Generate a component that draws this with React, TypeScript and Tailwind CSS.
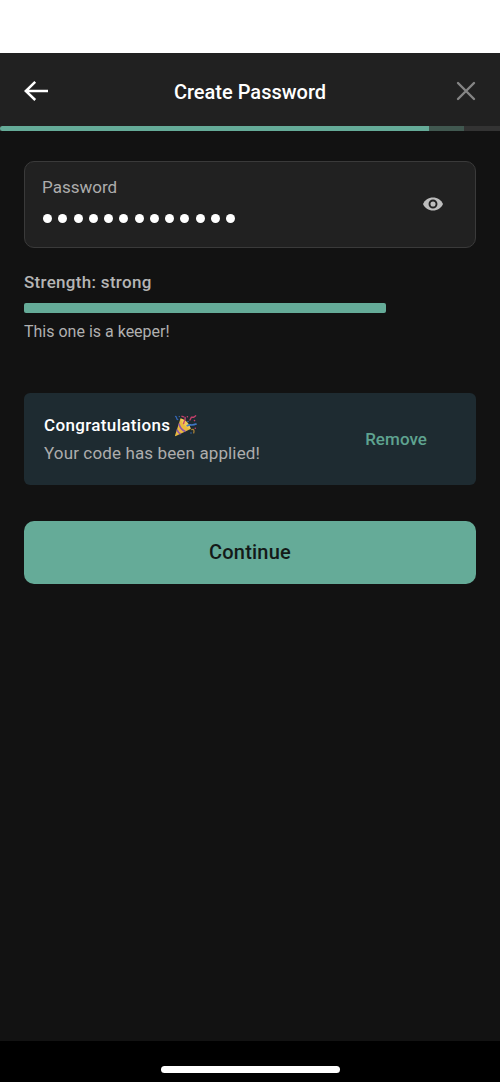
import { useState } from 'react'

const PASSWORD_LENGTH = 13

function ArrowLeftIcon() {
  return (
    <svg width="25" height="22" viewBox="0 0 25 22" fill="none">
      <path
        d="M11.2 1.8 1.8 11l9.4 9M2.2 11H24"
        stroke="#ffffff"
        strokeWidth="2.5"
      />
    </svg>
  )
}

function CloseIcon() {
  return (
    <svg width="20" height="20" viewBox="0 0 20 20" fill="none">
      <path
        d="M2 2l16 16M18 2 2 18"
        stroke="#858585"
        strokeWidth="2.4"
        strokeLinecap="round"
      />
    </svg>
  )
}

function EyeIcon() {
  return (
    <svg width="20" height="14" viewBox="0 0 20 14">
      <path
        d="M0 7C1.7 2.9 5.5.4 10 .4S18.3 2.9 20 7c-1.7 4.1-5.5 6.5-10 6.5S1.7 11.1 0 7Z"
        fill="#bdbdbd"
      />
      <circle cx="10" cy="7" r="3.5" fill="#bdbdbd" stroke="#212121" strokeWidth="1.9" />
    </svg>
  )
}

function PartyIcon() {
  return (
    <svg width="23" height="22" viewBox="0 0 23 22" fill="none">
      <path d="M6.5 3.5 1 20.4c-.1.7.3.9.9.7L16.6 14C16 9.5 11.5 4.5 6.5 3.5Z" fill="#e9b93f" />
      <path d="M6.5 3.5C11.5 4.5 16 9.5 16.6 14c-3.6-.4-9.4-5.8-10.1-10.5Z" fill="#f0cb58" />
      <path d="M4.9 8.5c.9 3.6 3.3 6.8 6.4 8M2.9 14.5c.7 2 2.1 3.7 3.8 4.5" stroke="#8d53ad" strokeWidth="1.5" />
      <path d="M9.6 8.6c.3-2.5 2.2-3.6 1.5-6.1" stroke="#c64473" strokeWidth="1.4" strokeLinecap="round" />
      <path d="M13.3 10.7c2.5-1.8 4.7.4 8.7-1.6" stroke="#3f78c6" strokeWidth="1.7" strokeLinecap="round" />
      <path d="M1.5 1.3c1.7.1.2 2.7 2.3 3.3" stroke="#3466b5" strokeWidth="1.3" strokeLinecap="round" />
      <path d="m16 5 1.4-2.8 2.3.1 2-1.5M8 1.3l1.7.5" stroke="#c23f6b" strokeWidth="1.4" strokeLinecap="round" />
      <path d="M17.7 14.6c2.4-1 2.6 1.7 2 3.3" stroke="#a98037" strokeWidth="1.3" strokeLinecap="round" />
      <g fill="#3b6fb9">
        <circle cx="14" cy="6.5" r=".8" />
        <circle cx="17" cy="18" r=".7" />
        <circle cx="5.3" cy="1.6" r=".7" />
      </g>
      <g fill="#c34470">
        <circle cx="20.5" cy="5.6" r=".8" />
        <circle cx="21.3" cy="13.2" r=".8" />
        <circle cx="13.4" cy="1.7" r=".8" />
      </g>
    </svg>
  )
}

export default function App() {
  const [hasCode, setHasCode] = useState(true)

  return (
    <div className="flex h-[1082px] w-[500px] flex-col overflow-hidden bg-[#121212] font-['Roboto',sans-serif]">
      <div className="h-[53px] shrink-0 bg-white" />

      <header className="flex h-[73px] shrink-0 items-center justify-between bg-[#212121] px-6 pt-[2px]">
        <button aria-label="Back" className="flex w-[25px]">
          <ArrowLeftIcon />
        </button>
        <h1 className="pt-[2px] text-[20px] leading-6 font-medium text-white">
          Create Password
        </h1>
        <button aria-label="Close" className="flex w-[25px] justify-end">
          <CloseIcon />
        </button>
      </header>

      <div className="flex h-[5px] shrink-0 bg-[#333333]">
        <div className="w-[429px] rounded-l-full bg-[#65ab98]" />
        <div className="w-[35px] bg-[#415850]" />
      </div>

      <main className="flex flex-1 flex-col px-6 pt-[30px]">
        <div className="flex h-[87px] items-center justify-between rounded-[10px] border border-[#3a3a3a] bg-[#212121] pr-[32px] pl-[17px]">
          <div className="flex flex-col pb-[10px]">
            <span className="text-[17px] leading-5 text-[#adadad]">Password</span>
            <div className="mt-[17px] flex gap-[6.28px] pl-px">
              {Array.from({ length: PASSWORD_LENGTH }, (_, index) => (
                <span key={index} className="size-[9px] rounded-full bg-white" />
              ))}
            </div>
          </div>
          <button aria-label="Show password" className="pb-px">
            <EyeIcon />
          </button>
        </div>

        <p className="mt-6 text-[17px] leading-5 font-medium tracking-[0.3px] text-[#b5b5b5]">
          Strength: strong
        </p>
        <div className="mt-[11px] h-[10px] w-[362px] rounded-[2px] bg-[#65ab98]" />
        <p className="mt-[9px] text-[16px] leading-5 text-[#b0b0b0]">
          This one is a keeper!
        </p>

        {hasCode && (
          <div className="mt-[51px] flex h-[92px] items-center justify-between rounded-[6px] bg-[#1e2b31] pr-[49px] pl-[20px]">
            <div className="pt-px">
              <div className="flex h-6 items-center gap-[4px]">
                <span className="text-[17px] font-medium tracking-[0.35px] text-white">
                  Congratulations
                </span>
                <PartyIcon />
              </div>
              <p className="mt-[3px] text-[17px] leading-6 tracking-[0.13px] text-[#adadad]">
                Your code has been applied!
              </p>
            </div>
            <button
              className="pt-[2px] text-[17px] font-medium tracking-[0.05px] text-[#5fa390]"
              onClick={() => setHasCode(false)}
            >
              Remove
            </button>
          </div>
        )}

        <button className="mt-[36px] h-[63px] rounded-[10px] bg-[#65ab98] pb-[2px] text-[20px] font-medium tracking-[0.2px] text-[#141a18]">
          Continue
        </button>
      </main>

      <footer className="flex h-[41px] shrink-0 justify-center bg-black pt-[25px]">
        <div className="h-[7px] w-[179px] rounded-full bg-white" />
      </footer>
    </div>
  )
}
